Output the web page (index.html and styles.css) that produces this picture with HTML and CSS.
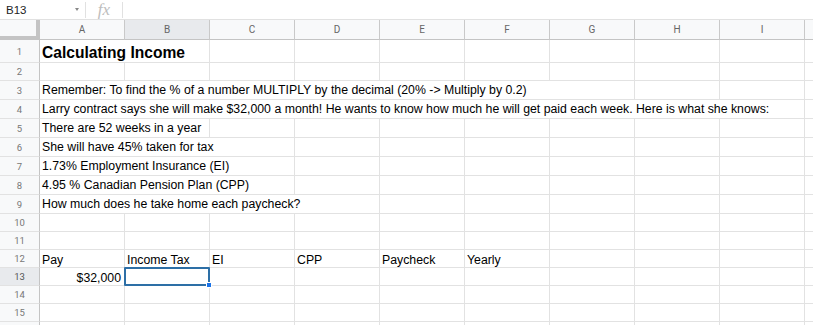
FILE: index.html
```html
<!DOCTYPE html>
<html lang="en">
<head>
  <meta charset="UTF-8"/>
  <title>Calculating Income</title>
  <link rel="stylesheet" href="styles.css">
</head>
<body>

  <!-- formula bar -->
  <div class="formula-bar">
    <div class="name-box">B13 <span class="caret"></span></div>
    <div class="fx">fx</div>
    <div class="formula-input"></div>
  </div>

  <!-- grid -->
  <div class="sheet">
    <div class="row head">
      <div class="corner"></div>
      <div class="col-head">A</div>
      <div class="col-head active">B</div>
      <div class="col-head">C</div>
      <div class="col-head">D</div>
      <div class="col-head">E</div>
      <div class="col-head">F</div>
      <div class="col-head">G</div>
      <div class="col-head">H</div>
      <div class="col-head">I</div>
      <div class="col-head"></div>
    </div>

    <div class="row h23">
      <div class="rh">1</div>
      <div class="cell span-2 title">Calculating Income</div>
      <div class="cell"></div><div class="cell"></div><div class="cell"></div><div class="cell"></div>
      <div class="cell"></div><div class="cell"></div><div class="cell"></div><div class="cell"></div>
    </div>

    <div class="row h18">
      <div class="rh">2</div>
      <div class="cell"></div><div class="cell"></div><div class="cell"></div><div class="cell"></div><div class="cell"></div>
      <div class="cell"></div><div class="cell"></div><div class="cell"></div><div class="cell"></div><div class="cell"></div>
    </div>

    <div class="row h19">
      <div class="rh">3</div>
      <div class="cell span-7">Remember: To find the % of a number MULTIPLY by the decimal (20% -&gt; Multiply by 0.2)</div>
      <div class="cell"></div><div class="cell"></div><div class="cell"></div>
    </div>

    <div class="row h19">
      <div class="rh">4</div>
      <div class="cell span-9">Larry contract says she will make $32,000 a month! He wants to know how much he will get paid each week. Here is what she knows:</div>
      <div class="cell"></div>
    </div>

    <div class="row h19">
      <div class="rh">5</div>
      <div class="cell span-2">There are 52 weeks in a year</div>
      <div class="cell"></div><div class="cell"></div><div class="cell"></div><div class="cell"></div>
      <div class="cell"></div><div class="cell"></div><div class="cell"></div><div class="cell"></div>
    </div>

    <div class="row h19">
      <div class="rh">6</div>
      <div class="cell span-3">She will have 45% taken for tax</div>
      <div class="cell"></div><div class="cell"></div><div class="cell"></div><div class="cell"></div>
      <div class="cell"></div><div class="cell"></div><div class="cell"></div>
    </div>

    <div class="row h19">
      <div class="rh">7</div>
      <div class="cell span-3">1.73% Employment Insurance (EI)</div>
      <div class="cell"></div><div class="cell"></div><div class="cell"></div><div class="cell"></div>
      <div class="cell"></div><div class="cell"></div><div class="cell"></div>
    </div>

    <div class="row h19">
      <div class="rh">8</div>
      <div class="cell span-3">4.95 % Canadian Pension Plan (CPP)</div>
      <div class="cell"></div><div class="cell"></div><div class="cell"></div><div class="cell"></div>
      <div class="cell"></div><div class="cell"></div><div class="cell"></div>
    </div>

    <div class="row h19">
      <div class="rh">9</div>
      <div class="cell span-4">How much does he take home each paycheck?</div>
      <div class="cell"></div><div class="cell"></div><div class="cell"></div>
      <div class="cell"></div><div class="cell"></div><div class="cell"></div>
    </div>

    <div class="row h18">
      <div class="rh">10</div>
      <div class="cell"></div><div class="cell"></div><div class="cell"></div><div class="cell"></div><div class="cell"></div>
      <div class="cell"></div><div class="cell"></div><div class="cell"></div><div class="cell"></div><div class="cell"></div>
    </div>

    <div class="row h18">
      <div class="rh">11</div>
      <div class="cell"></div><div class="cell"></div><div class="cell"></div><div class="cell"></div><div class="cell"></div>
      <div class="cell"></div><div class="cell"></div><div class="cell"></div><div class="cell"></div><div class="cell"></div>
    </div>

    <div class="row h18 low">
      <div class="rh">12</div>
      <div class="cell">Pay</div>
      <div class="cell">Income Tax</div>
      <div class="cell">EI</div>
      <div class="cell">CPP</div>
      <div class="cell">Paycheck</div>
      <div class="cell">Yearly</div>
      <div class="cell"></div><div class="cell"></div><div class="cell"></div><div class="cell"></div>
    </div>

    <div class="row h18 low">
      <div class="rh active">13</div>
      <div class="cell num">$32,000</div>
      <div class="cell selected"><span class="handle"></span></div>
      <div class="cell"></div><div class="cell"></div><div class="cell"></div><div class="cell"></div>
      <div class="cell"></div><div class="cell"></div><div class="cell"></div><div class="cell"></div>
    </div>

    <div class="row h18">
      <div class="rh">14</div>
      <div class="cell"></div><div class="cell"></div><div class="cell"></div><div class="cell"></div><div class="cell"></div>
      <div class="cell"></div><div class="cell"></div><div class="cell"></div><div class="cell"></div><div class="cell"></div>
    </div>

    <div class="row h18">
      <div class="rh">15</div>
      <div class="cell"></div><div class="cell"></div><div class="cell"></div><div class="cell"></div><div class="cell"></div>
      <div class="cell"></div><div class="cell"></div><div class="cell"></div><div class="cell"></div><div class="cell"></div>
    </div>

    <div class="row h18">
      <div class="rh"></div>
      <div class="cell"></div><div class="cell"></div><div class="cell"></div><div class="cell"></div><div class="cell"></div>
      <div class="cell"></div><div class="cell"></div><div class="cell"></div><div class="cell"></div><div class="cell"></div>
    </div>
  </div>

</body>
</html>
```

FILE: styles.css
```css
* {
  margin: 0; padding: 0;
  box-sizing: border-box;
}

body {
  font-family: "Liberation Sans", Arial, sans-serif;
  color: #000;
  background: #fff;
  width: 813px;
  height: 325px;
  overflow: hidden;
}

/* formula bar */
.formula-bar {
  display: flex;
  align-items: center;
  height: 20px;
  border-bottom: 1px solid #e1e1e1;
}

.name-box {
  width: 86px;
  height: 16px;
  display: flex;
  align-items: center;
  justify-content: space-between;
  padding: 0 6px 0 6px;
  font-size: 11.5px;
  color: #222;
  border-right: 1px solid #e1e1e1;
}

.caret {
  width: 0; height: 0;
  border-left: 2.5px solid transparent;
  border-right: 2.5px solid transparent;
  border-top: 3px solid #888;
}

.fx {
  width: 37px;
  height: 16px;
  line-height: 15px;
  text-align: center;
  font-family: "Liberation Serif", serif;
  font-style: italic;
  font-size: 17px;
  color: #bdbdbd;
  border-right: 1px solid #e1e1e1;
}

.formula-input { flex: 1; }

/* grid */
.sheet {
  width: 813px;
  overflow: hidden;
}

.row {
  display: flex;
}

.row.head { height: 20px; }
.row.h23 { height: 23px; }
.row.h19 { height: 19px; }
.row.h18 { height: 18px; }

.corner {
  width: 40px;
  flex: none;
  background: #f8f9fa;
  border-right: 4px solid #c4c4c4;
  border-bottom: 4px solid #c4c4c4;
}

.col-head {
  width: 85px;
  flex: none;
  display: flex;
  align-items: center;
  justify-content: center;
  background: #f8f9fa;
  border-right: 1px solid #c9c9c9;
  border-bottom: 1px solid #c4c4c4;
  font-family: Roboto, "Liberation Sans", sans-serif;
  font-size: 10px;
  color: #666;
}

.col-head.active { background: #e8eaed; }

.rh {
  width: 40px;
  flex: none;
  display: flex;
  align-items: center;
  justify-content: center;
  background: #f8f9fa;
  border-right: 1px solid #c4c4c4;
  border-bottom: 1px solid #e2e2e2;
  font-family: Roboto, "Liberation Sans", sans-serif;
  font-size: 9.5px;
  color: #777;
}

.rh.active { background: #e8eaed; color: #555; }

.cell {
  width: 85px;
  flex: none;
  display: flex;
  align-items: flex-end;
  padding: 0 3px 1px 2px;
  border-right: 1px solid #e2e2e2;
  border-bottom: 1px solid #e2e2e2;
  font-size: 12.3px;
  line-height: 15px;
  white-space: nowrap;
  position: relative;
}

.row.low .cell {
  padding-bottom: 0;
  line-height: 13px;
}

.cell.span-2 { width: 170px; }
.cell.span-3 { width: 255px; }
.cell.span-4 { width: 340px; }
.cell.span-7 { width: 595px; }
.cell.span-9 { width: 765px; }

.cell.title {
  font-size: 15.6px;
  font-weight: bold;
  line-height: 18px;
  padding-bottom: 0;
}

.cell.num { justify-content: flex-end; }

.cell.selected::after {
  content: "";
  position: absolute;
  top: -1px; left: -1px;
  width: 86px;
  height: 19px;
  box-sizing: border-box;
  border: 2px solid #2d6fa6;
  border-radius: 1px;
}

.handle {
  position: absolute;
  right: -3px;
  bottom: -3px;
  width: 6px;
  height: 6px;
  background: #1a73e8;
  border: 1px solid #fff;
  z-index: 1;
}
```
